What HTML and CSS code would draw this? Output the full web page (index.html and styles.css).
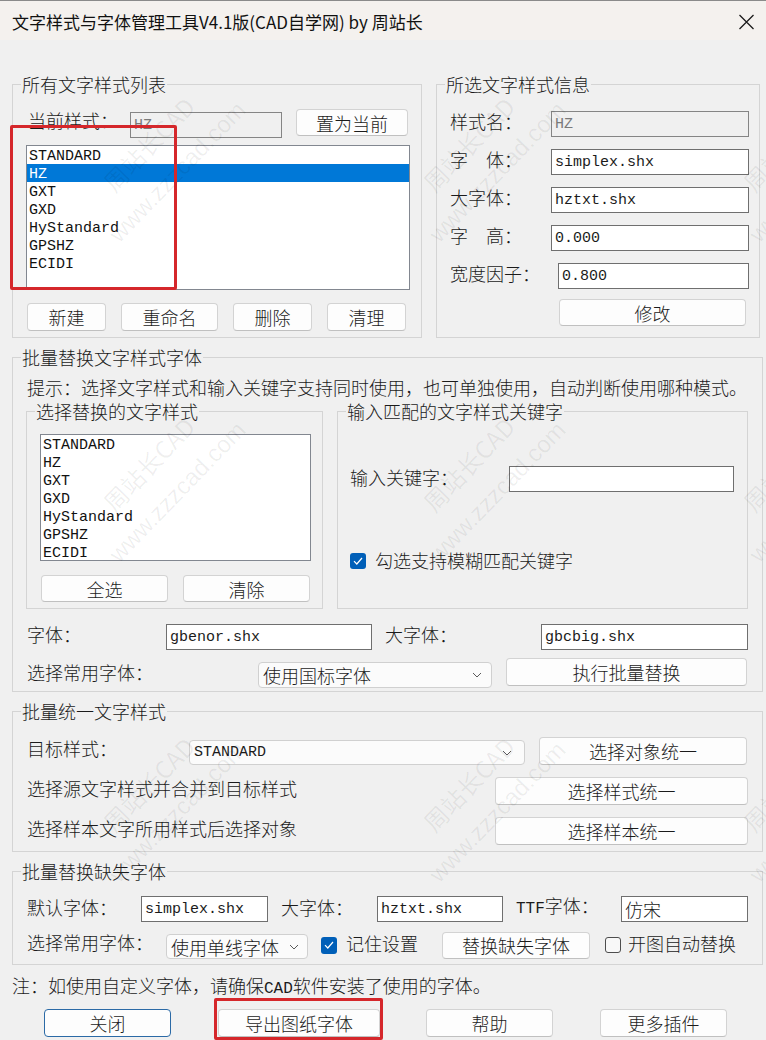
FILE: index.html
```html
<!DOCTYPE html>
<html lang="zh-CN">
<head>
<meta charset="utf-8">
<title>文字样式与字体管理工具</title>
<link rel="stylesheet" href="styles.css">
</head>
<body>
<div class="window">
  <header class="titlebar">
    <span class="title">文字样式与字体管理工具V4.1版(CAD自学网) by 周站长</span>
    <svg class="close" width="17" height="16" viewBox="0 0 17 16" aria-hidden="true">
      <path d="M1.5 1L15.5 15M15.5 1L1.5 15" stroke="#1c1c1c" stroke-width="1.3" fill="none"/>
    </svg>
  </header>

  <main class="content">
    <div class="top-row">
      <fieldset class="group g-styles">
        <legend>所有文字样式列表</legend>
        <div class="g-body">
          <div class="cur-row">
            <span class="label">当前样式：</span>
            <input class="field disabled" value="HZ" readonly>
            <button class="btn">置为当前</button>
          </div>
          <ul class="listbox lb-main">
            <li>STANDARD</li>
            <li class="sel">HZ</li>
            <li>GXT</li>
            <li>GXD</li>
            <li>HyStandard</li>
            <li>GPSHZ</li>
            <li>ECIDI</li>
          </ul>
          <div class="btn-row">
            <button class="btn b-short">新建</button>
            <button class="btn b-rename">重命名</button>
            <button class="btn b-short">删除</button>
            <button class="btn b-short">清理</button>
          </div>
        </div>
      </fieldset>

      <fieldset class="group g-info">
        <legend>所选文字样式信息</legend>
        <div class="g-body">
          <div class="info-row">
            <span class="label">样式名：</span>
            <input class="field disabled" value="HZ" readonly>
          </div>
          <div class="info-row">
            <span class="label">字　体：</span>
            <input class="field" value="simplex.shx" readonly>
          </div>
          <div class="info-row">
            <span class="label">大字体：</span>
            <input class="field" value="hztxt.shx" readonly>
          </div>
          <div class="info-row">
            <span class="label">字　高：</span>
            <input class="field" value="0.000" readonly>
          </div>
          <div class="info-row factor">
            <span class="label">宽度因子：</span>
            <input class="field" value="0.800" readonly>
          </div>
          <button class="btn b-modify">修改</button>
        </div>
      </fieldset>
    </div>

    <fieldset class="group wide g-replace">
      <legend>批量替换文字样式字体</legend>
      <div class="g-body">
        <p class="tip">提示：选择文字样式和输入关键字支持同时使用，也可单独使用，自动判断使用哪种模式。</p>
        <div class="sub-row">
          <fieldset class="group sg-styles">
            <legend>选择替换的文字样式</legend>
            <div class="g-body">
              <ul class="listbox lb-sub">
                <li>STANDARD</li>
                <li>HZ</li>
                <li>GXT</li>
                <li>GXD</li>
                <li>HyStandard</li>
                <li>GPSHZ</li>
                <li>ECIDI</li>
              </ul>
              <div class="btn-row">
                <button class="btn b-half">全选</button>
                <button class="btn b-half">清除</button>
              </div>
            </div>
          </fieldset>
          <fieldset class="group sg-keyword">
            <legend>输入匹配的文字样式关键字</legend>
            <div class="g-body">
              <div class="kw-row">
                <span class="label">输入关键字：</span>
                <input class="field" value="" readonly>
              </div>
              <label class="check-row">
                <span class="check on"><svg width="10" height="8" viewBox="0 0 10 8"><path d="M1 4.2L3.8 7L9 1" stroke="#fff" stroke-width="1.2" fill="none"/></svg></span>
                <span class="check-text">勾选支持模糊匹配关键字</span>
              </label>
            </div>
          </fieldset>
        </div>

        <div class="font-row">
          <span class="label l-font">字体：</span>
          <input class="field f-font" value="gbenor.shx" readonly>
          <span class="label l-big">大字体：</span>
          <input class="field f-big" value="gbcbig.shx" readonly>
        </div>
        <div class="common-row">
          <span class="label">选择常用字体：</span>
          <div class="combo c-gb">
            <span>使用国标字体</span>
            <svg class="chev" width="10" height="6" viewBox="0 0 10 6"><path d="M1 1L5 5L9 1" stroke="#5a5a5a" stroke-width="1" fill="none"/></svg>
          </div>
          <button class="btn b-run">执行批量替换</button>
        </div>
      </div>
    </fieldset>

    <fieldset class="group wide g-unify">
      <legend>批量统一文字样式</legend>
      <div class="g-body">
        <div class="u-row">
          <span class="label l-target">目标样式：</span>
          <div class="combo c-target">
            <span class="lat">STANDARD</span>
            <svg class="chev" width="10" height="6" viewBox="0 0 10 6"><path d="M1 1L5 5L9 1" stroke="#5a5a5a" stroke-width="1" fill="none"/></svg>
          </div>
          <button class="btn b-obj">选择对象统一</button>
        </div>
        <div class="u-row">
          <span class="label grow">选择源文字样式并合并到目标样式</span>
          <button class="btn b-unify">选择样式统一</button>
        </div>
        <div class="u-row">
          <span class="label grow">选择样本文字所用样式后选择对象</span>
          <button class="btn b-unify">选择样本统一</button>
        </div>
      </div>
    </fieldset>

    <fieldset class="group wide g-missing">
      <legend>批量替换缺失字体</legend>
      <div class="g-body">
        <div class="m-row">
          <span class="label l-def">默认字体：</span>
          <input class="field f-def" value="simplex.shx" readonly>
          <span class="label l-mbig">大字体：</span>
          <input class="field f-mbig" value="hztxt.shx" readonly>
          <span class="label l-ttf"><span class="lat">TTF</span>字体：</span>
          <input class="field cjk f-ttf" value="仿宋" readonly>
        </div>
        <div class="m-row2">
          <span class="label l-common">选择常用字体：</span>
          <div class="combo c-single">
            <span>使用单线字体</span>
            <svg class="chev" width="10" height="6" viewBox="0 0 10 6"><path d="M1 1L5 5L9 1" stroke="#5a5a5a" stroke-width="1" fill="none"/></svg>
          </div>
          <label class="check-inline remember">
            <span class="check on"><svg width="10" height="8" viewBox="0 0 10 8"><path d="M1 4.2L3.8 7L9 1" stroke="#fff" stroke-width="1.2" fill="none"/></svg></span>
            <span class="check-text">记住设置</span>
          </label>
          <button class="btn b-missing">替换缺失字体</button>
          <label class="check-inline auto">
            <span class="check off"></span>
            <span class="check-text">开图自动替换</span>
          </label>
        </div>
      </div>
    </fieldset>

    <p class="note">注：如使用自定义字体，请确保<span class="lat">CAD</span>软件安装了使用的字体。</p>

    <div class="bottom-row">
      <button class="btn default b-close">关闭</button>
      <button class="btn b-export">导出图纸字体</button>
      <button class="btn b-help">帮助</button>
      <button class="btn b-more">更多插件</button>
    </div>
  </main>

  <div class="watermark" aria-hidden="true">
    <div class="wm"><div class="wm-text"><span>周站长CAD</span><span class="wm-url">www.zzzcad.com</span></div></div>
    <div class="wm"><div class="wm-text"><span>周站长CAD</span><span class="wm-url">www.zzzcad.com</span></div></div>
    <div class="wm"><div class="wm-text"><span>周站长CAD</span><span class="wm-url">www.zzzcad.com</span></div></div>
    <div class="wm"><div class="wm-text"><span>周站长CAD</span><span class="wm-url">www.zzzcad.com</span></div></div>
    <div class="wm"><div class="wm-text"><span>周站长CAD</span><span class="wm-url">www.zzzcad.com</span></div></div>
    <div class="wm"><div class="wm-text"><span>周站长CAD</span><span class="wm-url">www.zzzcad.com</span></div></div>
    <div class="wm"><div class="wm-text"><span>周站长CAD</span><span class="wm-url">www.zzzcad.com</span></div></div>
    <div class="wm"><div class="wm-text"><span>周站长CAD</span><span class="wm-url">www.zzzcad.com</span></div></div>
    <div class="wm"><div class="wm-text"><span>周站长CAD</span><span class="wm-url">www.zzzcad.com</span></div></div>
  </div>

  <div class="mark mark-list"></div>
  <div class="mark mark-export"></div>
</div>
</body>
</html>
```

FILE: styles.css
```css
* { box-sizing: border-box; }

html, body {
  margin: 0;
  padding: 0;
}

body {
  width: 766px;
  height: 1040px;
  overflow: hidden;
  background: #f0f0f0;
  font-family: "Noto Sans CJK SC", sans-serif;
  font-weight: 300;
  font-size: 18px;
  line-height: 20px;
  color: #1b1b1b;
}

button, input {
  font: inherit;
  color: inherit;
  margin: 0;
}

.window {
  position: relative;
  width: 766px;
  height: 1040px;
  background: #f0f0f0;
  border-top: 1px solid #8a8a8a;
  overflow: hidden;
}

/* ---------- title bar ---------- */
.titlebar {
  height: 39px;
  display: flex;
  align-items: center;
  justify-content: space-between;
  padding: 2px 11px 0 12px;
  background: #f4f1ee;
  font-size: 17px;
  font-weight: 400;
  color: #111;
}

.close { display: block; }

/* ---------- layout ---------- */
.content {
  padding: 34px 0 0 12px;
}

.top-row {
  display: flex;
  gap: 14px;
}

.group {
  margin: 0;
  padding: 0;
  min-width: 0;
  border: 1px solid #d4d4d4;
}

.group > legend {
  margin-left: 8px;
  padding: 0 1px;
  line-height: 20px;
}

/* labels sit a little above the centre line of their row */
.label {
  white-space: nowrap;
  flex: none;
  padding-bottom: 6px;
}

.lat {
  font-family: "Liberation Mono", monospace;
  font-size: 15px;
}

.label .lat,
.note .lat {
  font-size: 16px;
}

/* ---------- controls ---------- */
.field {
  height: 26px;
  padding: 0 0 0 3px;
  border: 1px solid #6f6f6f;
  border-radius: 0;
  background: #fff;
  font-family: "Liberation Mono", monospace;
  font-weight: 400;
  font-size: 15px;
  outline: none;
  flex: none;
}

.field.disabled {
  background: #f0f0f0;
  border-color: #858585;
  color: #7a7a7a;
}

.field.cjk {
  font-family: "Noto Sans CJK SC", sans-serif;
  font-weight: 300;
  font-size: 18px;
}

.btn {
  height: 28px;
  padding: 0;
  background: #fdfdfd;
  border: 1px solid #d3d3d3;
  border-bottom-color: #c0c0c0;
  border-radius: 4px;
  font-size: 18px;
  line-height: 20px;
  color: #1b1b1b;
  flex: none;
}

.btn.default {
  border: 1px solid #2b6aa6;
}

.listbox {
  list-style: none;
  margin: 0;
  padding: 0;
  border: 1px solid #828790;
  background: #fff;
  font-family: "Liberation Mono", monospace;
  font-weight: 400;
  font-size: 15px;
  color: #111;
}

.listbox li {
  height: 18px;
  line-height: 22px;
  padding-left: 2px;
}

.listbox li.sel {
  background: #0078d7;
  color: #fff;
}

.combo {
  display: flex;
  align-items: center;
  justify-content: space-between;
  height: 26px;
  padding: 0 9px 0 4px;
  background: #fbfbfb;
  border: 1px solid #d0d0d0;
  border-radius: 4px;
  white-space: nowrap;
  flex: none;
}

.combo .lat { font-weight: 400; }

.chev { display: block; flex: none; }

.check {
  display: grid;
  place-items: center;
  width: 16px;
  height: 16px;
  border-radius: 3px;
  flex: none;
}

.check.on { background: #005fb8; }

.check.off {
  background: #f8f8f8;
  border: 1px solid #4d4d4d;
}

/* ---------- all styles list ---------- */
.g-styles { width: 410px; }

.g-styles > .g-body {
  padding: 15px 11px 6px 13px;
}

.cur-row {
  display: flex;
  align-items: flex-start;
  height: 29px;
}

.cur-row .label {
  width: 104px;
  padding: 0 0 0 2px;
  margin-top: 1px;
}

.cur-row .field {
  width: 152px;
  margin-top: 3px;
}

.cur-row .btn {
  width: 112px;
  height: 27px;
  margin-left: 14px;
}

.lb-main {
  width: 384px;
  height: 145px;
  margin-top: 7px;
}

.btn-row {
  display: flex;
  gap: 15px;
  padding-left: 1px;
}

.g-styles .btn-row { margin-top: 13px; }

.b-short { width: 79px; }
.b-rename { width: 97px; }

/* ---------- selected style info ---------- */
.g-info { width: 324px; }

.g-info > .g-body {
  display: flex;
  flex-direction: column;
  gap: 12px;
  padding: 17px 10px 6px 13px;
}

.info-row {
  display: flex;
  align-items: center;
  height: 26px;
}

.info-row .label { width: 101px; }
.info-row .field { width: 198px; }
.info-row.factor .label { width: 108px; }
.info-row.factor .field { width: 191px; }

.b-modify {
  width: 187px;
  height: 27px;
  margin: -2px 0 0 109px;
}

/* ---------- batch replace ---------- */
.wide { width: 751px; }

.g-replace { margin-top: 9px; }

.g-replace > .g-body {
  padding: 10px 13px 3px 13px;
}

.tip {
  margin: 0 0 1px;
  padding-left: 1px;
  white-space: nowrap;
}

.sub-row {
  display: flex;
  gap: 14px;
  margin-top: 4px;
}

.sg-styles { width: 297px; }
.sg-keyword { width: 411px; }

.sg-styles > .g-body {
  padding: 13px 12px 6px 13px;
}

.lb-sub {
  width: 271px;
  height: 127px;
}

.sg-styles .btn-row { margin-top: 14px; }

.b-half {
  width: 127px;
  height: 27px;
}

.sg-keyword > .g-body {
  padding: 0 12px;
}

.kw-row {
  display: flex;
  align-items: center;
  height: 26px;
  margin-top: 45px;
}

.kw-row .label { width: 159px; padding-bottom: 4px; }
.kw-row .field { width: 225px; }

.check-row {
  display: flex;
  align-items: center;
  height: 20px;
  margin-top: 59px;
}

.check-row .check-text { margin-left: 9px; padding-bottom: 2px; }

.font-row {
  display: flex;
  align-items: center;
  height: 26px;
  margin-top: 15px;
}

.l-font { width: 140px; padding-left: 1px; }
.f-font { width: 206px; }
.l-big { width: 156px; margin-left: 13px; }
.f-big { width: 207px; }

.common-row {
  display: flex;
  align-items: flex-start;
  height: 30px;
  margin-top: 8px;
}

.common-row .label {
  width: 232px;
  padding: 0 0 0 1px;
  margin-top: 4px;
}

.c-gb {
  width: 234px;
  margin-top: 4px;
}

.b-run {
  width: 241px;
  margin-left: 14px;
}

/* ---------- unify styles ---------- */
.g-unify { margin-top: 9px; }

.g-unify > .g-body {
  padding: 16px 14px 6px 13px;
}

.u-row {
  display: flex;
  align-items: center;
  height: 28px;
}

.u-row + .u-row { margin-top: 12px; }

.u-row .label { padding-left: 1px; }
.u-row .label.grow { flex: 1; }
.l-target { width: 163px; }

.c-target {
  width: 336px;
  height: 25px;
  margin-top: 3px;
  padding-right: 12px;
}

.b-obj {
  width: 208px;
  margin-left: 14px;
}

.b-unify { width: 253px; }

/* ---------- missing fonts ---------- */
.g-missing { margin-top: 9px; }

.g-missing > .g-body {
  padding: 15px 13px 5px 13px;
}

.m-row {
  display: flex;
  align-items: center;
  height: 26px;
}

.m-row .label { padding-bottom: 4px; }

.l-def { width: 115px; padding-left: 1px; }
.f-def { width: 127px; }
.l-mbig { width: 96px; margin-left: 13px; }
.f-mbig { width: 126px; }
.l-ttf { width: 105px; margin-left: 13px; }
.f-ttf { width: 127px; }

.m-row2 {
  display: flex;
  align-items: center;
  height: 28px;
  margin-top: 9px;
}

.l-common { width: 140px; padding-left: 1px; }

.c-single {
  width: 142px;
  height: 25px;
  margin-top: 3px;
  padding-right: 8px;
}

.check-inline {
  display: flex;
  align-items: center;
  white-space: nowrap;
}

.check-inline .check-text { padding-bottom: 4px; }

.remember { margin-left: 13px; }
.remember .check { height: 17px; }
.remember .check-text { margin-left: 9px; }

.b-missing {
  width: 148px;
  height: 27px;
  margin-left: 24px;
}

.auto { margin-left: 15px; }
.auto .check-text { margin-left: 7px; }

/* ---------- footer ---------- */
.note {
  margin: 10px 0 0;
  white-space: nowrap;
}

.bottom-row {
  display: flex;
  margin-top: 10px;
  padding-left: 32px;
}

.b-close { width: 127px; }
.b-export { width: 162px; margin-left: 47px; }
.b-help { width: 127px; margin-left: 46px; }
.b-more { width: 127px; margin-left: 47px; }

/* ---------- watermark layer ---------- */
.watermark {
  position: absolute;
  left: 3px;
  top: -3px;
  display: grid;
  grid-template-columns: repeat(3, 320px);
  grid-auto-rows: 320px;
  pointer-events: none;
  color: rgba(0, 0, 0, 0.065);
  font-weight: 400;
}

.wm {
  display: flex;
  align-items: center;
  justify-content: center;
}

.wm-text {
  display: flex;
  flex-direction: column;
  align-items: center;
  transform: rotate(-46deg);
  font-size: 24px;
  line-height: 40px;
  white-space: nowrap;
}

.wm-url {
  font-family: "Liberation Sans", sans-serif;
}

/* ---------- red highlight frames ---------- */
.mark {
  position: absolute;
  border: 3px solid #d5272b;
  border-radius: 2px;
  pointer-events: none;
}

.mark-list {
  left: 10px;
  top: 124px;
  width: 167px;
  height: 165px;
}

.mark-export {
  left: 214px;
  top: 997px;
  width: 169px;
  height: 42px;
}
```
